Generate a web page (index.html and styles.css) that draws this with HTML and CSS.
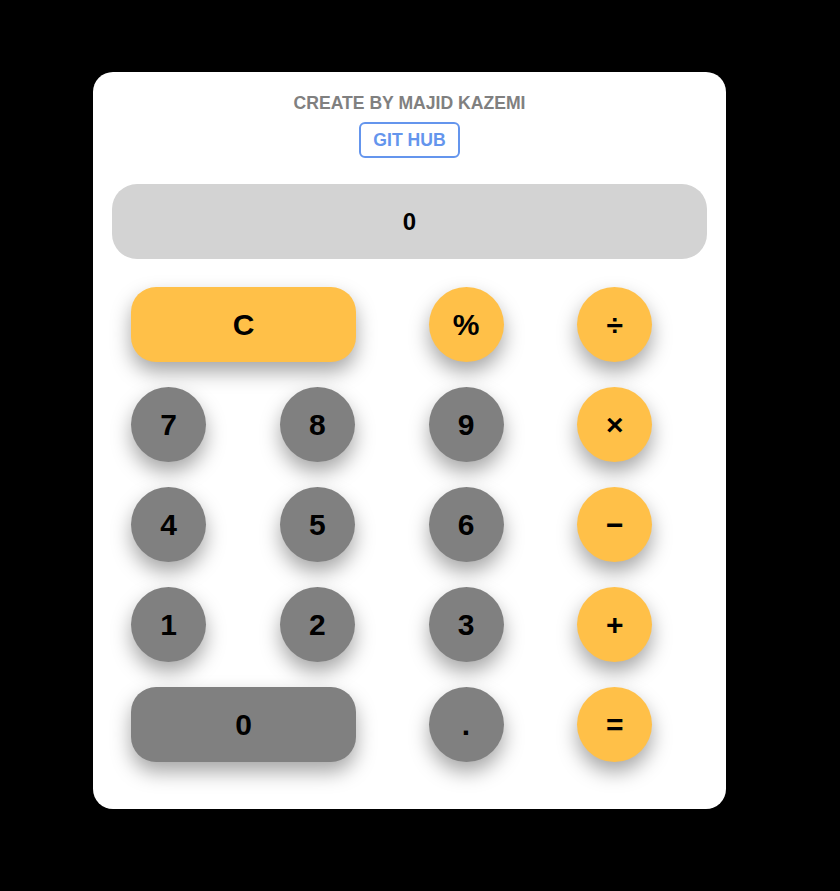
FILE: index.html
```html
<!DOCTYPE html>
<html>
<head>
<meta charset="utf-8">
<link rel="stylesheet" href="styles.css">
</head>
<body>
<div class="card">
  <div class="title">CREATE BY MAJID KAZEMI</div>
  <div class="link-row"><a class="git" href="#">GIT HUB</a></div>
  <div class="display">0</div>
  <div class="keys">
    <button class="key op wide">C</button>
    <button class="key op">%</button>
    <button class="key op">÷</button>
    <button class="key num">7</button>
    <button class="key num">8</button>
    <button class="key num">9</button>
    <button class="key op">×</button>
    <button class="key num">4</button>
    <button class="key num">5</button>
    <button class="key num">6</button>
    <button class="key op">−</button>
    <button class="key num">1</button>
    <button class="key num">2</button>
    <button class="key num">3</button>
    <button class="key op">+</button>
    <button class="key num wide">0</button>
    <button class="key num">.</button>
    <button class="key op">=</button>
  </div>
</div>
</body>
</html>
```
FILE: styles.css
```css
html, body {
  margin: 0;
  padding: 0;
  background: #000;
  font-family: "Liberation Sans", Arial, sans-serif;
}
.card {
  width: 633px;
  box-sizing: border-box;
  margin: 72px 0 0 93px;
  background: #fff;
  border-radius: 20px;
  padding: 21px 19px 47px;
}
.title {
  text-align: center;
  color: #808080;
  font-weight: bold;
  font-size: 17.6px;
  line-height: 20px;
}
.link-row {
  display: flex;
  justify-content: center;
  margin-top: 9px;
}
.git {
  display: block;
  box-sizing: border-box;
  height: 36px;
  width: 101px;
  border: 2px solid #6495ed;
  border-radius: 6px;
  color: #6495ed;
  font-weight: bold;
  font-size: 17.6px;
  line-height: 32px;
  text-align: center;
  text-decoration: none;
}
.display {
  margin-top: 26px;
  height: 75px;
  background: #d3d3d3;
  border-radius: 25px;
  display: flex;
  align-items: center;
  justify-content: center;
  font-weight: bold;
  font-size: 24px;
  color: #000;
}
.keys {
  margin-top: 28px;
  display: grid;
  grid-template-columns: repeat(4, 1fr);
  row-gap: 25px;
}
.key {
  width: 75px;
  height: 75px;
  margin-left: 19px;
  border: none;
  border-radius: 50%;
  font-family: "Liberation Sans", Arial, sans-serif;
  font-weight: bold;
  font-size: 30px;
  color: #000;
  padding: 0;
  box-shadow: 0 10px 20px rgba(0, 0, 0, 0.35);
  display: flex;
  align-items: center;
  justify-content: center;
}
.key.wide {
  grid-column: span 2;
  width: 225px;
  border-radius: 25px;
}
.op { background: #ffc048; }
.num { background: #808080; }
```
